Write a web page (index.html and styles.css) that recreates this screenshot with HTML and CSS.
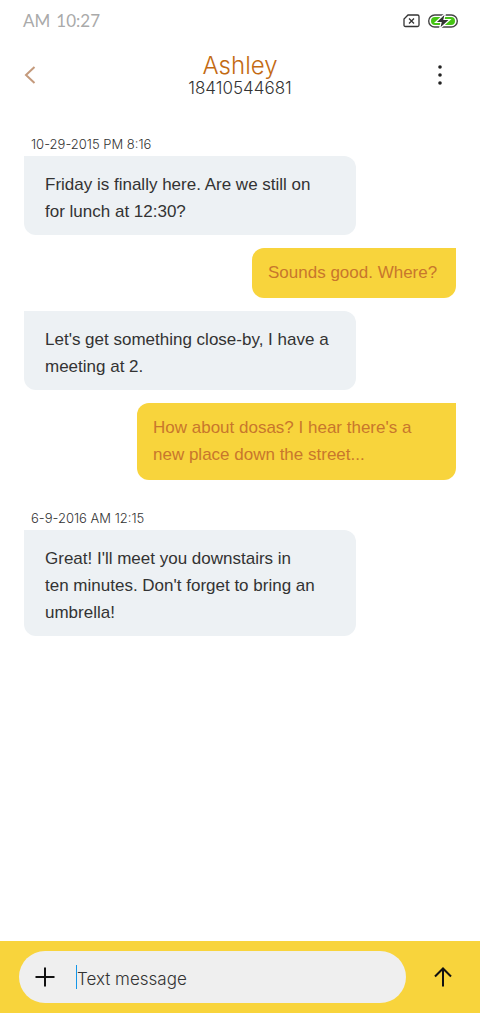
FILE: index.html
```
<!DOCTYPE html>
<html lang="en">
<head>
<meta charset="utf-8">
<meta name="viewport" content="width=device-width, initial-scale=1">
<title>Ashley</title>
<link rel="stylesheet" href="styles.css">
</head>
<body>
<div class="status">
  <span class="clock"><span>AM</span><span>10:27</span></span>
  <span class="indicators">
    <svg width="17" height="14" viewBox="0 0 17 14" fill="none" stroke="#333" stroke-width="1.3" aria-hidden="true">
      <path d="M5 1H14.5Q16 1 16 2.500V11Q16 12.500 14.500 12.500H2.500Q1 12.500 1 11V5Z"/>
      <path d="M6 4.500L11 9.500M11 4.500L6 9.500"/>
    </svg>
    <svg width="32" height="16" viewBox="0 0 32 16" aria-hidden="true">
      <rect x="1.700" y="2" width="28.600" height="12" rx="6" fill="#fff" stroke="#444" stroke-width="1.400"/>
      <rect x="4" y="4" width="24" height="8" rx="4" fill="#45c414"/>
      <path d="M18.500 0L8.500 9.500H14L12.500 16L23 6.500H17Z" fill="#333" stroke="#fff" stroke-width="1.200"/>
    </svg>
  </span>
</div>
<header class="header">
  <button class="icon-button" type="button" aria-label="Back">
    <svg width="12" height="18" viewBox="0 0 12 18" fill="none" stroke="#c49a7c" stroke-width="2" aria-hidden="true"><path d="M10.500 1L2 9L10.500 17"/></svg>
  </button>
  <div class="contact">
    <h1 class="name">Ashley</h1>
    <p class="number">18410544681</p>
  </div>
  <button class="icon-button more" type="button" aria-label="More options">
    <svg width="4" height="20" viewBox="0 0 4 20" fill="#222" aria-hidden="true"><circle cx="2" cy="2" r="1.800"/><circle cx="2" cy="10" r="1.800"/><circle cx="2" cy="18" r="1.800"/></svg>
  </button>
</header>
<main class="thread">
  <p class="date">10-29-2015 PM 8:16</p>
  <p class="bubble received">Friday is finally here. Are we still on<br>for lunch at 12:30?</p>
  <p class="bubble sent">Sounds good. Where?</p>
  <p class="bubble received">Let's get something close-by, I have a<br>meeting at 2.</p>
  <p class="bubble sent long">How about dosas? I hear there's a<br>new place down the street...</p>
  <p class="date later">6-9-2016 AM 12:15</p>
  <p class="bubble received">Great! I'll meet you downstairs in<br>ten minutes. Don't forget to bring an<br>umbrella!</p>
</main>
<form class="composer">
  <div class="field">
    <button class="icon-button" type="button" aria-label="Add attachment">
      <svg width="20" height="20" viewBox="0 0 20 20" fill="none" stroke="#111" stroke-width="2" aria-hidden="true"><path d="M10 .5V19.500M.5 10H19.500"/></svg>
    </button>
    <input class="message" type="text" placeholder="Text message" aria-label="Text message">
  </div>
  <button class="icon-button send" type="submit" aria-label="Send">
    <svg width="18" height="20" viewBox="0 0 18 20" fill="none" stroke="#111" stroke-width="2" aria-hidden="true"><path d="M9 2V19.500M1 9.500L9 1.500L17 9.500"/></svg>
  </button>
</form>
</body>
</html>
```
FILE: styles.css
```
* {
  box-sizing: border-box;
}

body {
  display: flex;
  flex-direction: column;
  min-height: 100vh;
  margin: 0;
  background: #fff;
  color: #333;
  font-family: Inter, "Liberation Sans", sans-serif;
  font-weight: 300;
}

h1,
p {
  margin: 0;
  font-weight: inherit;
}

button,
input {
  padding: 0;
  border: 0;
  background: none;
  font: inherit;
}

.status {
  display: flex;
  align-items: center;
  justify-content: space-between;
  padding: 11px 21px 9px 23px;
}

.clock {
  display: flex;
  gap: 6px;
  color: #aaa;
  font-family: Lato, sans-serif;
  font-weight: 400;
  font-size: 17px;
  line-height: 20px;
}

.indicators {
  display: flex;
  align-items: center;
  gap: 7px;
}

.header {
  display: grid;
  grid-template-columns: 48px 1fr 48px;
  align-items: center;
  padding: 11px 16px 0;
}

.icon-button {
  display: flex;
  align-items: center;
  justify-content: center;
  width: 28px;
  height: 44px;
}

.more {
  width: 100%;
}

.contact {
  padding-top: 2px;
  text-align: center;
}

.name {
  color: #c36a12;
  font-size: 24px;
  line-height: 26px;
}

.number {
  font-size: 17px;
  line-height: 19px;
}

.thread {
  display: flex;
  flex: 1;
  flex-direction: column;
  align-items: flex-start;
  gap: 13px;
  padding: 38px 24px 24px;
}

.date {
  margin-bottom: -9px;
  padding-left: 7px;
  font-size: 13px;
  line-height: 16px;
}

.later {
  margin-top: 17px;
}

.bubble {
  font-family: "Liberation Sans", Arial, sans-serif;
  font-size: 17px;
  line-height: 27px;
}

.received {
  width: 332px;
  max-width: 100%;
  padding: 15px 16px 10px 21px;
  border-radius: 0 12px 12px 12px;
  background: #edf1f4;
}

.sent {
  align-self: flex-end;
  min-width: 204px;
  padding: 11px 16px 12px;
  border-radius: 12px 0 12px 12px;
  background: #f8d43c;
  color: #c8772c;
}

.long {
  width: 319px;
  max-width: 100%;
}

.composer {
  display: flex;
  align-items: center;
  gap: 23px;
  padding: 10px 23px 10px 19px;
  background: #f8d43c;
}

.field {
  display: flex;
  flex: 1;
  align-items: center;
  gap: 17px;
  height: 52px;
  padding: 0 24px 0 12px;
  border-radius: 26px;
  background: #efefef;
}

.message {
  flex: 1;
  min-width: 0;
  height: 24px;
  padding-top: 3px;
  border-left: 1px solid #1496e8;
  outline: 0;
  color: #333;
  font-size: 17px;
}

.message::placeholder {
  color: #333;
  opacity: 1;
}
```
